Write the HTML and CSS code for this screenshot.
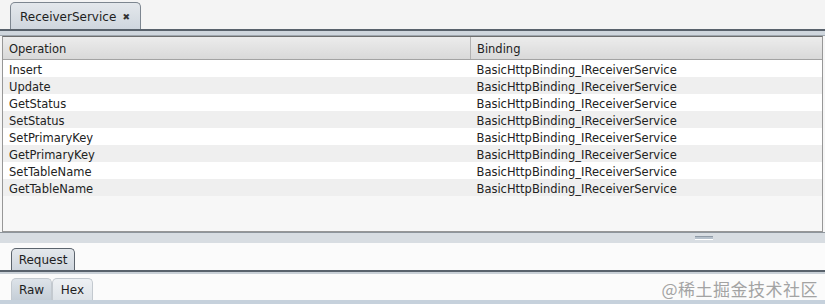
FILE: index.html
```html
<!DOCTYPE html>
<html lang="en">
  <head>
    <meta charset="UTF-8" />
    <title>ReceiverService</title>
    <link rel="stylesheet" href="styles.css">
  </head>
  <body>
    <div class="app">
      <div class="tabbar">
        <div class="tab main-tab">
          <span>ReceiverService</span>
          <span class="close">&#x2716;</span>
        </div>
      </div>
      <div class="tabline"></div>

      <div class="panel">
        <table class="ops">
          <tr>
            <th class="col-op">Operation</th>
            <th>Binding</th>
          </tr>
          <tr><td>Insert</td><td>BasicHttpBinding_IReceiverService</td></tr>
          <tr><td>Update</td><td>BasicHttpBinding_IReceiverService</td></tr>
          <tr><td>GetStatus</td><td>BasicHttpBinding_IReceiverService</td></tr>
          <tr><td>SetStatus</td><td>BasicHttpBinding_IReceiverService</td></tr>
          <tr><td>SetPrimaryKey</td><td>BasicHttpBinding_IReceiverService</td></tr>
          <tr><td>GetPrimaryKey</td><td>BasicHttpBinding_IReceiverService</td></tr>
          <tr><td>SetTableName</td><td>BasicHttpBinding_IReceiverService</td></tr>
          <tr><td>GetTableName</td><td>BasicHttpBinding_IReceiverService</td></tr>
        </table>
      </div>

      <div class="splitter"><span class="grip"></span></div>

      <div class="subbar">
        <div class="tab small-tab">Request</div>
      </div>
      <div class="subline"></div>

      <div class="viewbar">
        <div class="tab view-tab active">Raw</div>
        <div class="tab view-tab">Hex</div>
      </div>
      <div class="bottomline"></div>

      <div class="watermark">@稀土掘金技术社区</div>
    </div>
  </body>
</html>
```

FILE: styles.css
```css
body {
  margin: 0;
  padding: 0;
  background: #f6f6f6;
  font-family: "DejaVu Sans", sans-serif;
  font-size: 11.5px;
  color: #222;
}
.app {
  position: relative;
  width: 825px;
  height: 304px;
  overflow: hidden;
  display: flex;
  flex-direction: column;
}
.tabbar {
  height: 29px;
  display: flex;
  align-items: flex-end;
  padding-left: 10px;
  background: #f4f4f4;
}
.tab {
  box-sizing: border-box;
  display: flex;
  align-items: center;
  border: 1px solid #7d8690;
  border-bottom: none;
  border-radius: 5px 5px 0 0;
  background: linear-gradient(#e4e8ec, #cfd6de);
  color: #1e1e1e;
}
.main-tab {
  width: 131px;
  height: 27px;
  padding: 1px 10px 0 9px;
  font-size: 12px;
  justify-content: space-between;
}
.close {
  font-size: 9px;
  color: #333;
}
.tabline {
  height: 7px;
  box-sizing: border-box;
  border-top: 2px solid #59626c;
  border-bottom: 1px solid #9ea6ae;
  background: #cfd6dd;
}
.panel {
  height: 196px;
  box-sizing: border-box;
  margin: 0 2px;
  border: 1px solid #979797;
  border-top-color: #6e6e6e;
  background: #f7f7f7;
}
.ops {
  width: 100%;
  border-collapse: collapse;
}
.ops th {
  height: 21px;
  padding: 1px 0 0 6px;
  text-align: left;
  font-weight: normal;
  background: linear-gradient(#ececec, #d9d9d9);
  border-bottom: 1px solid #a3a3a3;
}
.ops th.col-op {
  width: 461px;
  border-right: 1px solid #b2b2b2;
}
.ops td {
  height: 15px;
  padding: 2px 0 0 6px;
  background: #fff;
}
.ops tr:nth-child(odd) td {
  background: #efefef;
}
.splitter {
  height: 11px;
  box-sizing: border-box;
  border-top: 1px solid #8e959c;
  background: #d8dde2;
  display: flex;
  justify-content: flex-end;
  padding-right: 112px;
  align-items: center;
}
.grip {
  width: 18px;
  height: 2px;
  border-top: 1px solid #8f9aa6;
  border-bottom: 1px solid #fff;
  background: #b5c0cb;
}
.subbar {
  height: 27px;
  display: flex;
  align-items: flex-end;
  padding-left: 11px;
  background: #fbfbfb;
}
.small-tab {
  width: 64px;
  height: 22px;
  justify-content: center;
  font-size: 12px;
  border-color: #5c646d;
}
.subline {
  height: 4px;
  box-sizing: border-box;
  border-top: 2px solid #59626c;
  background: #c9d0d7;
}
.viewbar {
  height: 26px;
  display: flex;
  align-items: flex-end;
  padding-left: 11px;
  background: #fbfbfb;
}
.view-tab {
  width: 41px;
  height: 22px;
  justify-content: center;
  font-size: 12px;
  border-color: #c3c9cf;
  background: linear-gradient(#eef1f4, #dde2e7);
}
.view-tab.active {
  background: linear-gradient(#dde3e9, #c5ced7);
}
.bottomline {
  flex: 1;
  background: #c6d1dc;
}
.watermark {
  position: absolute;
  right: 7px;
  bottom: 3px;
  font-family: "Noto Sans CJK SC", sans-serif;
  font-size: 17px;
  color: #a3a3a3;
  letter-spacing: 0.5px;
}
```
